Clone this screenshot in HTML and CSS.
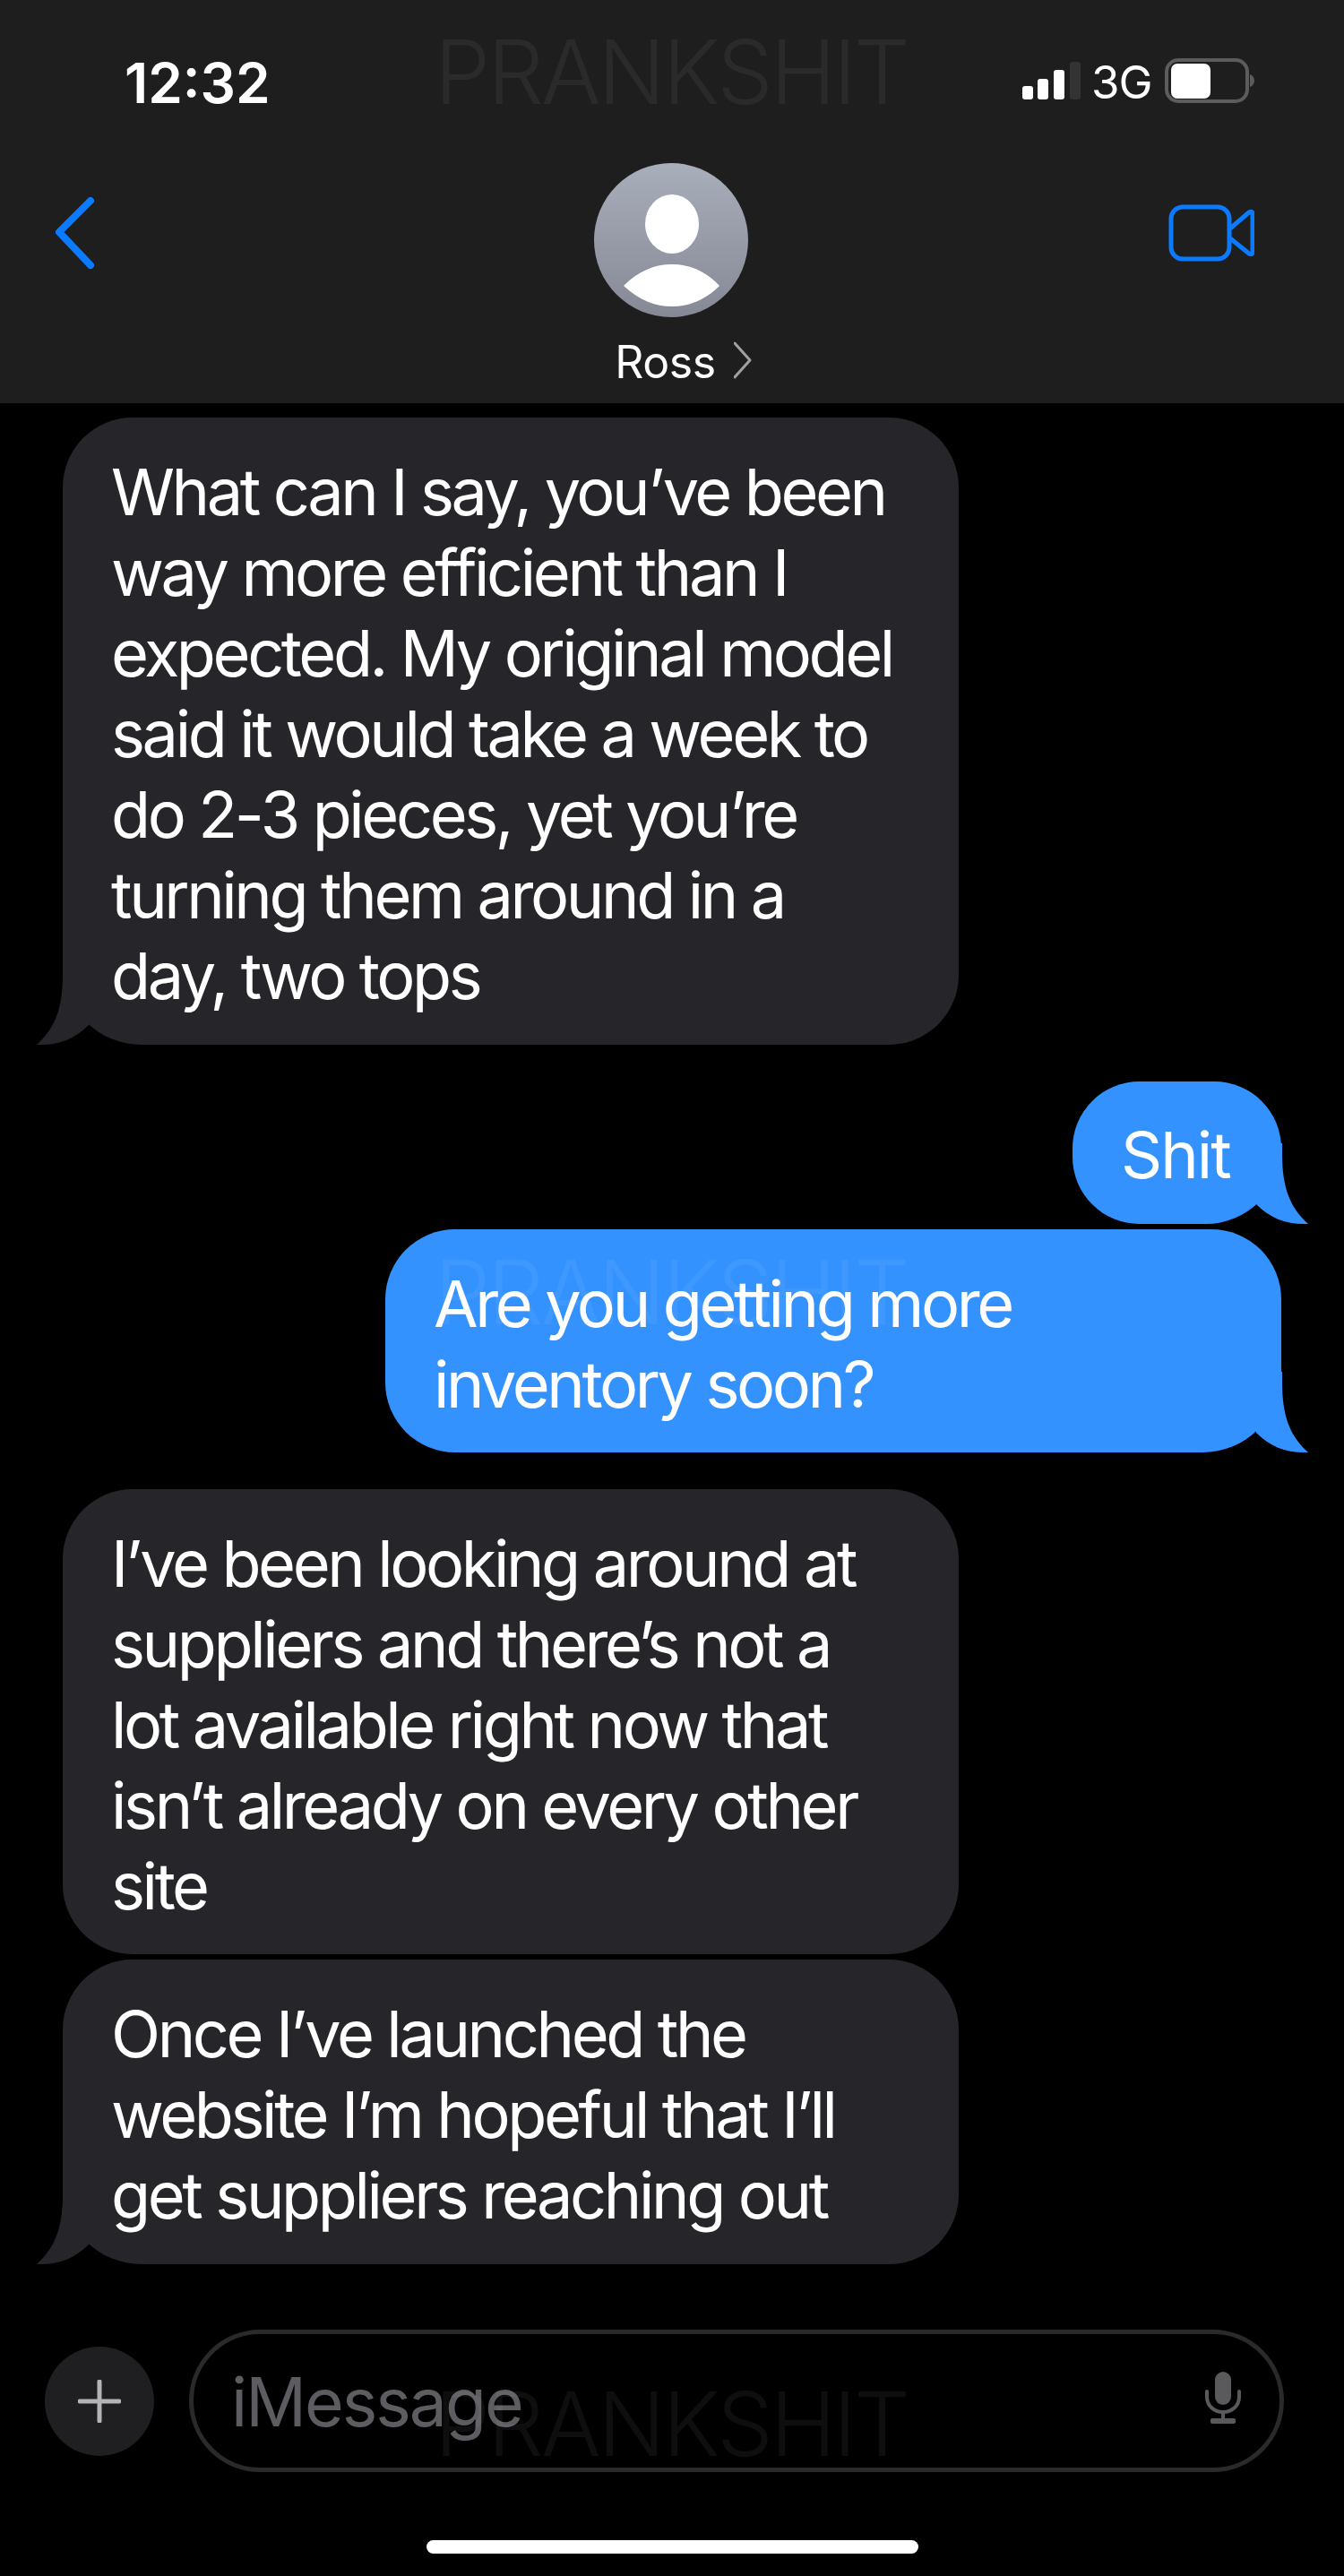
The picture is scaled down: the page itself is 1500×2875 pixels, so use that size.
FILE: index.html
```html
<!DOCTYPE html>
<html lang="en">
<head>
<meta charset="utf-8">
<title>Messages</title>
<link rel="stylesheet" href="styles.css">
</head>
<body>
<div class="phone">
  <header class="top">
    <div class="status">
      <span class="time">12:32</span>
      <div class="status-right">
        <svg class="bars" width="65" height="42" viewBox="0 0 65 42"><rect x="0" y="27" width="12" height="15" rx="3" fill="#fff"/><rect x="17" y="19" width="12" height="23" rx="3" fill="#fff"/><rect x="35" y="9" width="12" height="33" rx="3" fill="#fff"/><rect x="53" y="0" width="12" height="42" rx="3" fill="#333"/></svg>
        <span class="net">3G</span>
        <svg class="battery" width="100" height="50" viewBox="0 0 100 50"><rect x="2" y="2" width="90" height="46" rx="13" fill="none" stroke="#5c5c5c" stroke-width="4"/><rect x="7" y="6" width="44" height="39" rx="7" fill="#fff"/><path d="M95 18c3 1 5 4 5 7s-2 6-5 7z" fill="#5c5c5c"/></svg>
      </div>
    </div>
    <nav class="nav">
      <svg class="back" width="46" height="80" viewBox="0 0 46 80"><path d="M40 4 L5 39 L40 76" fill="none" stroke="#0a7aff" stroke-width="8" stroke-linecap="round" stroke-linejoin="round"/></svg>
      <div class="contact">
        <svg class="avatar" width="172" height="172" viewBox="0 0 172 172"><defs><linearGradient id="ag" x1="0" y1="0" x2="0" y2="1"><stop offset="0" stop-color="#a9aebb"/><stop offset="1" stop-color="#858995"/></linearGradient></defs><circle cx="86" cy="86" r="86" fill="url(#ag)"/><ellipse cx="87" cy="68" rx="30" ry="33" fill="#fff"/><path d="M33 137C50 120 68 113 87 113C106 113 124 120 140 137C124 153 106 160 87 160C68 160 50 153 33 137Z" fill="#fff"/></svg>
        <div class="name-row">
          <span class="name">Ross</span>
          <svg class="chev" width="20" height="44" viewBox="0 0 20 44"><path d="M1 2 L18 21 L1 40" fill="none" stroke="#a0a0a0" stroke-width="3" stroke-linecap="round" stroke-linejoin="round"/></svg>
        </div>
      </div>
      <svg class="video" width="96" height="64" viewBox="0 0 96 64"><rect x="3" y="3" width="65" height="58" rx="13" fill="none" stroke="#0a7aff" stroke-width="5"/><path d="M69 27 L90 9 Q94 7 94 11 L94 53 Q94 57 90 55 L69 38" fill="none" stroke="#0a7aff" stroke-width="5" stroke-linejoin="round"/></svg>
    </nav>
  </header>

  <main class="thread">
    <div class="msg in tail m1">
      What can I say, you’ve been<br>way more efficient than I<br>expected. My original model<br>said it would take a week to<br>do 2-3 pieces, yet you’re<br>turning them around in a<br>day, two tops
      <svg class="tail-svg" width="60" height="90" viewBox="0 0 60 90"><path d="M29 0V12C29 50 20 72 0 90C24 91 42 84 58 68V0Z"/></svg>
    </div>
    <div class="msg out tail m2">
      Shit
      <svg class="tail-svg" width="60" height="90" viewBox="0 0 60 90"><path d="M29 0V12C29 50 20 72 0 90C24 91 42 84 58 68V0Z"/></svg>
    </div>
    <div class="msg out tail m3">
      Are you getting more<br>inventory soon?
      <svg class="tail-svg" width="60" height="90" viewBox="0 0 60 90"><path d="M29 0V12C29 50 20 72 0 90C24 91 42 84 58 68V0Z"/></svg>
    </div>
    <div class="msg in m4">
      I’ve been looking around at<br>suppliers and there’s not a<br>lot available right now that<br>isn’t already on every other<br>site
    </div>
    <div class="msg in tail m5">
      Once I’ve launched the<br>website I’m hopeful that I’ll<br>get suppliers reaching out
      <svg class="tail-svg" width="60" height="90" viewBox="0 0 60 90"><path d="M29 0V12C29 50 20 72 0 90C24 91 42 84 58 68V0Z"/></svg>
    </div>
  </main>

  <footer class="composer">
    <div class="plus"><svg width="48" height="48" viewBox="0 0 48 48"><path d="M24 2V46M2 24H46" stroke="#b4b4b6" stroke-width="5" stroke-linecap="round"/></svg></div>
    <div class="field">
      <span class="placeholder">iMessage</span>
      <svg class="mic" width="40" height="58" viewBox="0 0 40 58"><rect x="11" y="0" width="18" height="37" rx="9" fill="#5a5a5c"/><path d="M2 22V28C2 38 10 45 20 45C30 45 38 38 38 28V22" fill="none" stroke="#5a5a5c" stroke-width="4" stroke-linecap="round"/><path d="M20 45V54" stroke="#5a5a5c" stroke-width="4"/><rect x="6" y="52" width="28" height="6" rx="2" fill="#5a5a5c"/></svg>
    </div>
  </footer>
  <div class="home-bar"></div>

  <span class="wm wm-top">PRANKSHIT</span>
  <span class="wm wm-mid">PRANKSHIT</span>
  <span class="wm wm-bot">PRANKSHIT</span>
</div>
</body>
</html>
```
FILE: styles.css
```css
* { box-sizing: border-box; }
html, body { margin: 0; padding: 0; background: #000; }
.phone {
  position: relative;
  width: 1500px;
  height: 2875px;
  overflow: hidden;
  background: #000;
  color: #fff;
  font-family: Inter, "Liberation Sans", sans-serif;
}
.top { height: 450px; background: #1e1e1e; }
.status {
  height: 182px;
  padding: 0 100px 0 139px;
  display: flex;
  justify-content: space-between;
  align-items: flex-start;
}
.time { font-size: 62px; line-height: 70px; font-weight: 600; margin-top: 58px; }
.status-right { display: flex; align-items: flex-start; margin-top: 65px; }
.bars { margin-top: 4px; }
.net { font-size: 51px; line-height: 54px; margin-left: 12px; width: 82px; letter-spacing: -1px; }
.nav {
  display: grid;
  grid-template-columns: 602px 172px 1fr;
  padding: 0 100px 0 61px;
  align-items: start;
}
.back { margin-top: 38px; }
.contact { display: flex; flex-direction: column; align-items: center; }
.avatar { display: block; }
.name-row { position: relative; margin-top: 22px; display: flex; justify-content: center; width: 172px; }
.name { font-size: 50px; line-height: 56px; letter-spacing: -0.4px; margin-left: -13px; }
.chev { position: absolute; left: 156px; top: 5px; }
.video { justify-self: end; margin-top: 46px; }

.thread { display: flex; flex-direction: column; padding-top: 16px; }
.msg {
  position: relative;
  font-size: 72px;
  line-height: 90px;
  letter-spacing: -3.4px;
  white-space: nowrap;
  padding: 38px 55px 25px 54px;
  border-radius: 78px;
}
.msg.in { background: #26262a; width: 1000px; margin-left: 70px; align-self: flex-start; }
.msg.out { background: #3492ff; margin-right: 70px; align-self: flex-end; }
.msg.in.tail { border-bottom-left-radius: 88px; }
.msg.out.tail { border-bottom-right-radius: 88px; }
.tail-svg { position: absolute; bottom: 0; overflow: visible; }
.in .tail-svg { left: -29px; fill: #26262a; }
.out .tail-svg { right: -30px; fill: #3492ff; transform: scaleX(-1); }
.m1 { height: 700px; }
.m2 { height: 159px; margin-top: 41px; width: 233px; padding-top: 37px; letter-spacing: -2px; }
.m3 { height: 249px; margin-top: 6px; width: 1000px; }
.m4 { height: 519px; margin-top: 41px; }
.m5 { height: 340px; margin-top: 6px; }

.composer {
  position: absolute;
  left: 50px;
  top: 2600px;
  width: 1383px;
  height: 159px;
  display: flex;
  align-items: center;
  gap: 39px;
}
.plus {
  width: 122px;
  height: 122px;
  border-radius: 50%;
  background: #1f1f21;
  display: flex;
  align-items: center;
  justify-content: center;
  flex: none;
}
.field {
  flex: 1;
  height: 159px;
  border: 5px solid #2a2a2d;
  border-radius: 80px;
  display: flex;
  align-items: center;
  justify-content: space-between;
  padding: 0 43px 0 42px;
}
.placeholder { font-size: 75px; line-height: 90px; letter-spacing: -2px; color: #5d5d61; margin-top: 2px; }
.mic { margin-top: -8px; }
.home-bar {
  position: absolute;
  left: 476px;
  top: 2835px;
  width: 549px;
  height: 15px;
  border-radius: 8px;
  background: #fff;
}
.wm {
  position: absolute;
  left: 485px;
  font-size: 99px;
  line-height: 100px;
  font-weight: 300;
  color: rgba(255, 255, 255, 0.055);
  letter-spacing: -3px;
  white-space: nowrap;
}
.wm-top { top: 30px; }
.wm-mid { top: 1392px; }
.wm-bot { top: 2655px; }
```
